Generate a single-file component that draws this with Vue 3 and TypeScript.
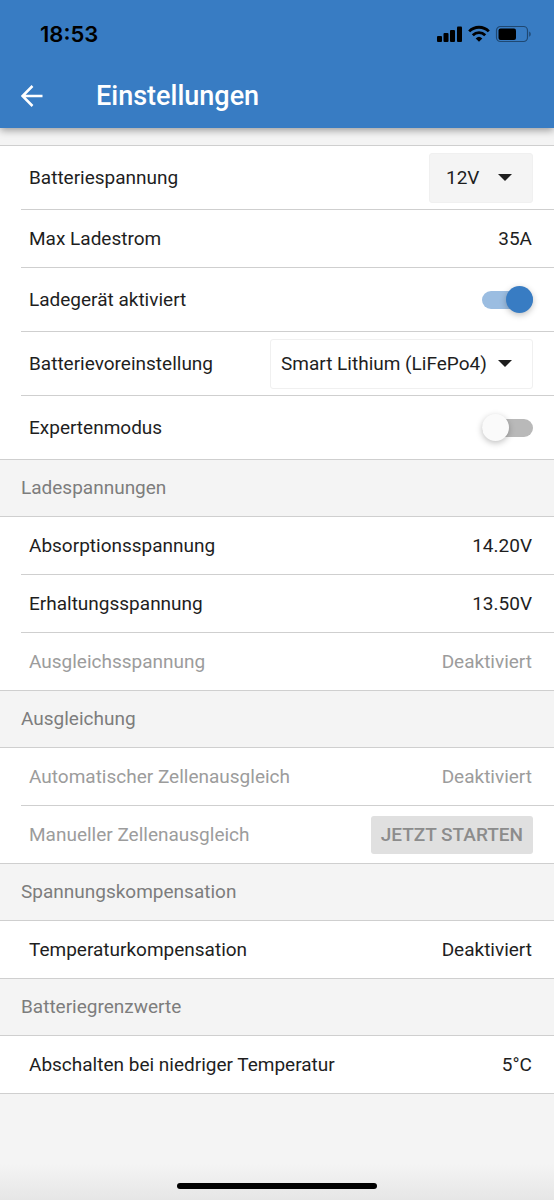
<script setup lang="ts">
import { ref } from 'vue'

type Kind = 'value' | 'select' | 'toggle' | 'button'

interface Row {
  id: string
  label: string
  kind: Kind
  value: string | boolean
  options?: string[]
  filled?: boolean
  disabled?: boolean
}

interface Section {
  title?: string
  rows: Row[]
}

const sections = ref<Section[]>([
  {
    rows: [
      { id: 'voltage', label: 'Batteriespannung', kind: 'select', value: '12V', options: ['12V', '24V'], filled: true },
      { id: 'current', label: 'Max Ladestrom', kind: 'value', value: '35A' },
      { id: 'charger', label: 'Ladegerät aktiviert', kind: 'toggle', value: true },
      {
        id: 'preset',
        label: 'Batterievoreinstellung',
        kind: 'select',
        value: 'Smart Lithium (LiFePo4)',
        options: ['Smart Lithium (LiFePo4)', 'Benutzerdefiniert'],
      },
      { id: 'expert', label: 'Expertenmodus', kind: 'toggle', value: false },
    ],
  },
  {
    title: 'Ladespannungen',
    rows: [
      { id: 'absorption', label: 'Absorptionsspannung', kind: 'value', value: '14.20V' },
      { id: 'float', label: 'Erhaltungsspannung', kind: 'value', value: '13.50V' },
      { id: 'equalize', label: 'Ausgleichsspannung', kind: 'value', value: 'Deaktiviert', disabled: true },
    ],
  },
  {
    title: 'Ausgleichung',
    rows: [
      { id: 'auto-eq', label: 'Automatischer Zellenausgleich', kind: 'value', value: 'Deaktiviert', disabled: true },
      { id: 'manual-eq', label: 'Manueller Zellenausgleich', kind: 'button', value: 'JETZT STARTEN', disabled: true },
    ],
  },
  {
    title: 'Spannungskompensation',
    rows: [{ id: 'temp-comp', label: 'Temperaturkompensation', kind: 'value', value: 'Deaktiviert' }],
  },
  {
    title: 'Batteriegrenzwerte',
    rows: [{ id: 'low-temp', label: 'Abschalten bei niedriger Temperatur', kind: 'value', value: '5°C' }],
  },
])
</script>

<template>
  <div class="screen">
    <header class="top">
      <div class="status">
        <span class="time">18:53</span>
        <svg class="status-icons" width="96" height="18" viewBox="0 0 96 18" aria-hidden="true">
          <rect x="1" y="11" width="5" height="6" rx="1" />
          <rect x="7.500" y="8" width="5" height="9" rx="1" />
          <rect x="14" y="5" width="5" height="12" rx="1" />
          <rect x="21" y="1.500" width="5" height="15.500" rx="1" />
          <g fill="none" stroke="#000" stroke-width="2.800">
            <path d="M33.200 6.400a13.600 13.600 0 0 1 19.600 0" />
            <path d="M36.800 10.200a8.800 8.800 0 0 1 12.400 0" />
          </g>
          <path d="M43 16.800l-3.300-3.400a4.800 4.800 0 0 1 6.600 0z" />
          <rect x="60.500" y="1.500" width="31" height="15" rx="4" fill="none" stroke="#1f4872" stroke-width="1.200" />
          <rect x="62.500" y="3.500" width="17.500" height="11.500" rx="2" />
          <path d="M93.200 6.500c2 .8 2 4.400 0 5.200z" fill="#1f4872" />
        </svg>
      </div>
      <div class="bar">
        <button class="back" type="button" aria-label="Zurück">
          <svg width="22" height="22" viewBox="0 0 22 22" aria-hidden="true">
            <path d="M21.500 11H2M11.500 1L1.500 11l10 10" fill="none" stroke="#fff" stroke-width="2.500" />
          </svg>
        </button>
        <h1>Einstellungen</h1>
      </div>
    </header>

    <main>
      <section v-for="(section, i) in sections" :key="i">
        <h2 v-if="section.title">{{ section.title }}</h2>
        <div class="rows">
          <div
            v-for="row in section.rows"
            :key="row.id"
            class="row"
            :class="{ tall: row.kind === 'select' || row.kind === 'toggle', disabled: row.disabled }"
          >
            <label v-if="row.kind === 'select' || row.kind === 'toggle'" :for="row.id">{{ row.label }}</label>
            <span v-else>{{ row.label }}</span>

            <div v-if="row.kind === 'select'" class="select" :class="{ filled: row.filled }">
              <select :id="row.id" v-model="row.value">
                <option v-for="option in row.options" :key="option">{{ option }}</option>
              </select>
              <svg class="caret" width="14" height="7" viewBox="0 0 14 7" aria-hidden="true">
                <path d="M0 0h14L7 7z" />
              </svg>
            </div>
            <input v-else-if="row.kind === 'toggle'" :id="row.id" v-model="row.value" class="toggle" type="checkbox" role="switch" />
            <button v-else-if="row.kind === 'button'" class="action" type="button" :disabled="row.disabled">{{ row.value }}</button>
            <span v-else>{{ row.value }}</span>
          </div>
        </div>
      </section>
    </main>

    <footer><div class="home"></div></footer>
  </div>
</template>

<style>
body {
  margin: 0;
}
</style>

<style scoped>
.screen {
  display: flex;
  flex-direction: column;
  min-height: 100vh;
  background: #f4f4f4;
  color: #1e1e1e;
  font-family: Roboto, 'Liberation Sans', sans-serif;
  font-size: 19px;
  line-height: 24px;
}
.top {
  position: relative;
  background: #387cc3;
  box-shadow: 0 2px 8px rgba(0, 0, 0, 0.4);
}
.status {
  display: flex;
  align-items: center;
  justify-content: space-between;
  height: 64px;
  padding: 3px 22px 0 40px;
  box-sizing: border-box;
}
.time {
  color: #000;
  font-family: Inter, sans-serif;
  font-size: 22px;
  font-weight: 600;
}
.bar {
  display: flex;
  align-items: center;
  gap: 53px;
  height: 64px;
  padding: 0 21px;
}
.back {
  display: flex;
  padding: 0;
  border: 0;
  background: none;
}
h1 {
  margin: 0;
  color: #fff;
  font-size: 27px;
  font-weight: 500;
  line-height: 32px;
}
main {
  margin-top: 17px;
  border-top: 1px solid #cfcfcf;
}
h2 {
  margin: 0;
  padding: 16px 21px;
  border-bottom: 1px solid #cfcfcf;
  color: #7d7d7d;
  font-size: 19px;
  font-weight: 400;
}
.rows {
  padding-left: 21px;
  border-bottom: 1px solid #cfcfcf;
  background: #fff;
}
.row {
  display: flex;
  align-items: center;
  justify-content: space-between;
  min-height: 57px;
  padding: 0 22px 0 8px;
}
.row + .row {
  border-top: 1px solid #cfcfcf;
}
.tall {
  min-height: 63px;
  padding-right: 21px;
}
.disabled {
  color: #9c9c9c;
}
.select {
  display: grid;
  align-items: center;
}
.select select,
.caret {
  grid-area: 1 / 1;
}
.select select {
  appearance: none;
  height: 50px;
  padding: 0 45px 0 10px;
  border: 1px solid #f0f0f0;
  border-radius: 3px;
  background: #fff;
  color: inherit;
  font: inherit;
}
.select.filled select {
  padding: 0 52px 0 16px;
  background: #f4f4f4;
}
.caret {
  justify-self: end;
  margin-right: 21px;
  fill: #1e1e1e;
  pointer-events: none;
}
.toggle {
  appearance: none;
  display: flex;
  align-items: center;
  width: 51px;
  height: 18px;
  margin: 0;
  border-radius: 9px;
  background: #b9b9b9;
}
.toggle::before {
  content: '';
  width: 27px;
  height: 27px;
  flex: none;
  border-radius: 50%;
  background: #fafafa;
  box-shadow: 0 2px 6px rgba(0, 0, 0, 0.25);
}
.toggle:checked {
  justify-content: flex-end;
  background: #9bbde1;
}
.toggle:checked::before {
  background: #387cc3;
}
.action {
  height: 38px;
  margin-right: -1px;
  padding: 0 10px;
  border: 0;
  border-radius: 3px;
  background: #e0e0e0;
  color: #8c8c8c;
  font: inherit;
  font-weight: 500;
}
footer {
  display: flex;
  flex: 1;
  align-items: flex-end;
  justify-content: center;
  padding-bottom: 11px;
  background: linear-gradient(to top, #e6e6e6, #f4f4f4 36px);
}
.home {
  width: 36%;
  height: 6px;
  border-radius: 3px;
  background: #000;
}
</style>
